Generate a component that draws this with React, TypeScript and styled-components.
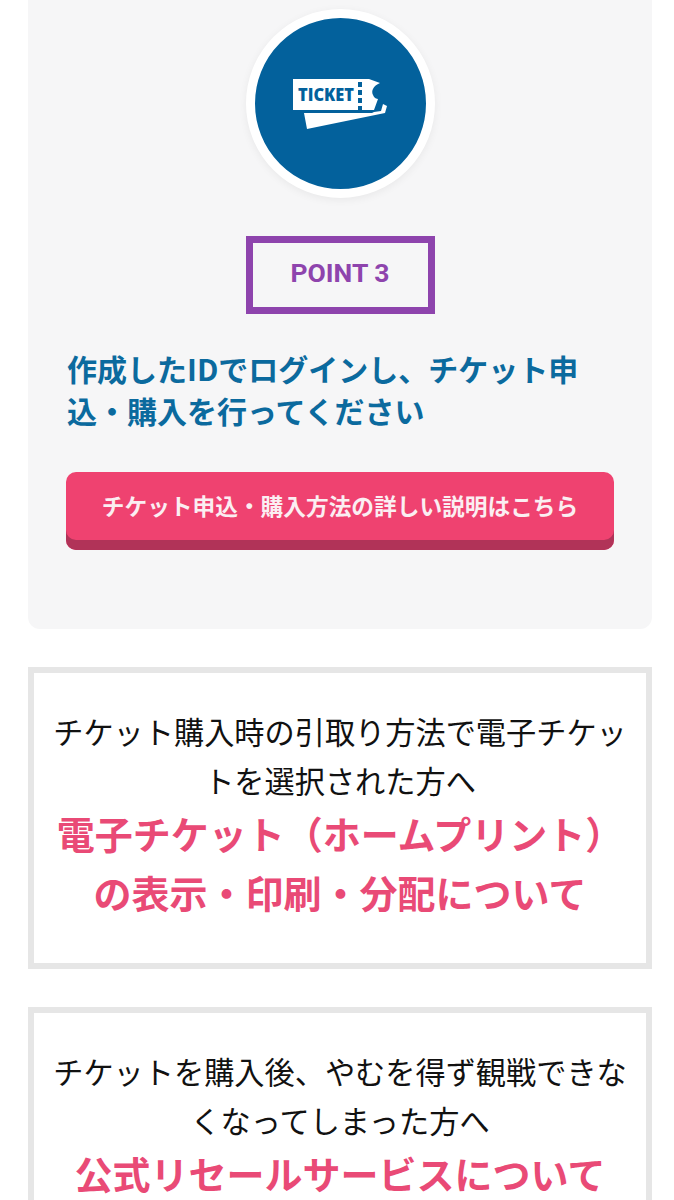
import styled, { createGlobalStyle } from 'styled-components'

const GlobalStyle = createGlobalStyle`
  html, body {
    margin: 0;
    padding: 0;
    background: #fff;
  }
  body {
    font-family: 'Noto Sans CJK JP', 'Noto Sans', sans-serif;
    color: #111;
  }
`

const Page = styled.div`
  height: 1200px;
  overflow: hidden;
  padding: 0 22px 0 28px;
  box-sizing: border-box;
`

const Card = styled.section`
  background: #f6f6f7;
  border-radius: 0 0 12px 12px;
  height: 629px;
  padding: 9px 38px 0;
  box-sizing: border-box;
  display: flex;
  flex-direction: column;
`

const Badge = styled.div`
  align-self: center;
  width: 189px;
  height: 189px;
  box-sizing: border-box;
  border: 9px solid #fff;
  border-radius: 50%;
  background: #03619c;
  box-shadow: 0 2px 8px rgba(0, 0, 0, 0.06);
  display: flex;
  align-items: center;
  justify-content: center;
`

const PointLabel = styled.div`
  align-self: center;
  margin-top: 38px;
  width: 189px;
  height: 78px;
  box-sizing: border-box;
  border: 7px solid #8e44ad;
  padding-bottom: 5px;
  display: flex;
  align-items: center;
  justify-content: center;
  font-family: Roboto, sans-serif;
  font-weight: 700;
  font-size: 26.5px;
  color: #8e44ad;
`

const CardTitle = styled.h2`
  margin: 33px 0 0 1px;
  font-size: 30px;
  line-height: 42px;
  font-weight: 700;
  color: #0b6a9e;
`

const DetailButton = styled.a`
  margin-top: 41px;
  height: 78px;
  box-sizing: border-box;
  padding-bottom: 12px;
  border-radius: 10px;
  background: #ef4270;
  box-shadow: inset 0 -10px 0 #b13358;
  display: flex;
  align-items: center;
  justify-content: center;
  color: #fbeef2;
  font-size: 22.7px;
  font-weight: 700;
`

const NoticeBox = styled.div`
  margin-top: 38px;
  border: 6px solid #e6e6e6;
  box-sizing: border-box;
  height: 302px;
  padding: 34px 0 0;
  text-align: center;
`

const NoticeText = styled.p`
  margin: 0;
  font-size: 30.2px;
  line-height: 49px;
  color: #111;
  white-space: nowrap;
`

const NoticeLink = styled.p`
  margin: -2px 0 0;
  font-size: 38px;
  line-height: 59px;
  font-weight: 700;
  color: #e94a76;
  white-space: nowrap;
`

const TicketIcon = () => (
  <svg width="94" height="50" viewBox="0 0 94 50">
    <path d="M0 0H76L87 4C80 7 78 12 80 16C81 19 84 20 85 20L81 31H0Z" fill="#fff" />
    <path d="M65 3h4v5h-4zM65 11h4v5h-4zM65 19h4v5h-4zM65 27h4v4h-4z" fill="#03619c" />
    <path d="M11 34H79L81 33L88 32L90 25L94 27L92 34L14 50Z" fill="#fff" />
    <text
      x="5"
      y="21.5"
      fontFamily="'Open Sans', sans-serif"
      fontWeight="800"
      fontSize="17"
      textLength={56}
      lengthAdjust="spacingAndGlyphs"
      fill="#03619c"
    >
      TICKET
    </text>
  </svg>
)

const App = () => (
  <>
    <GlobalStyle />
    <Page>
      <Card>
        <Badge>
          <TicketIcon />
        </Badge>
        <PointLabel>POINT 3</PointLabel>
        <CardTitle>
          作成したIDでログインし、チケット申
          <br />
          込・購入を行ってください
        </CardTitle>
        <DetailButton>チケット申込・購入方法の詳しい説明はこちら</DetailButton>
      </Card>
      <NoticeBox>
        <NoticeText>
          チケット購入時の引取り方法で電子チケッ
          <br />
          トを選択された方へ
        </NoticeText>
        <NoticeLink>
          電子チケット（ホームプリント）
          <br />
          の表示・印刷・分配について
        </NoticeLink>
      </NoticeBox>
      <NoticeBox>
        <NoticeText>
          チケットを購入後、やむを得ず観戦できな
          <br />
          くなってしまった方へ
        </NoticeText>
        <NoticeLink>公式リセールサービスについて</NoticeLink>
      </NoticeBox>
    </Page>
  </>
)

export default App
